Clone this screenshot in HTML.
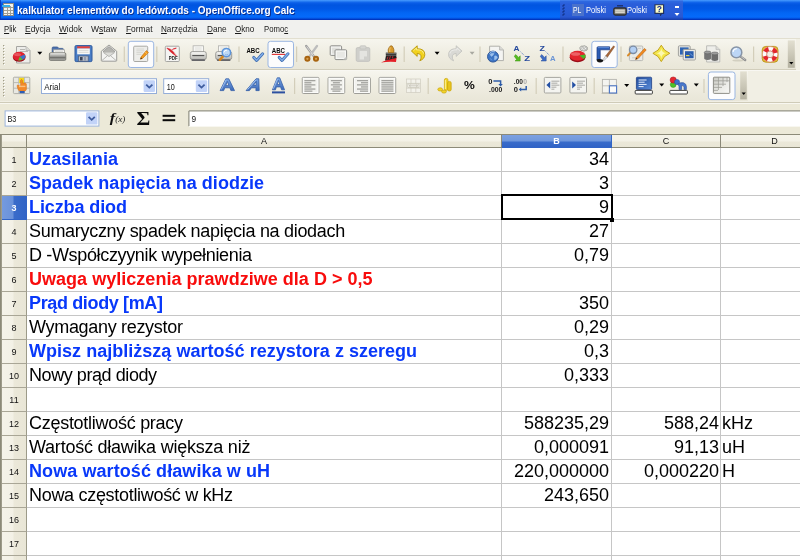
<!DOCTYPE html>
<html lang="pl">
<head>
<meta charset="utf-8">
<title>kalkulator elementów do ledówt.ods - OpenOffice.org Calc</title>
<style>
html,body{margin:0;padding:0;}
body{width:800px;height:560px;overflow:hidden;background:#ECE9D8;position:relative;font-family:"Liberation Sans","DejaVu Sans",sans-serif;}
#app{position:absolute;left:0;top:0;width:800px;height:560px;overflow:hidden;background:#ECE9D8;}
#app{will-change:transform;}
#app div,#app span,#app svg,#app i,#app b{position:absolute;box-sizing:border-box;display:block;}
#app u{text-decoration:underline;}
/* title bar */
#title{left:0;top:0;width:800px;height:20px;background:linear-gradient(to bottom,#4A9CFF 0px,#2A80F4 1.2px,#0A5EE8 2.8px,#0055E0 5px,#0058E6 9px,#0366F4 13px,#056AFA 17px,#0458E6 18.2px,#0038C4 19.2px,#0030B8 20px);}
#title .txt{text-shadow:1px 1px 0 #0A2A8A;}
#lang{left:560px;top:0;width:123px;height:20px;background:linear-gradient(to bottom,#4C86EE 0,#2E68E0 1.5px,#2A5EDA 4px,#295CD8 12px,#2858D2 17px,#1E48BC 18.6px,#18389E 20px);}
/* menu */
#menu{left:0;top:20px;width:800px;height:18px;background:#F1F1EE;}
/* toolbars */
#tb1{left:0;top:38px;width:800px;height:32px;background:#F1EFE4;border-top:1px solid #E2DFD0;}
#tb1:after{content:"";position:absolute;left:0;top:0;width:796px;height:30px;background:linear-gradient(to bottom,#F6F5EE 0,#EFEDE1 50%,#E9E6D8 100%);border-bottom:1px solid #D2CEBC;}
#tb2{left:0;top:70px;width:800px;height:34px;background:#F1EFE4;border-top:1px solid #F8F7F2;border-bottom:1px solid #F8F7F0;}
#tb2:after{content:"";position:absolute;left:0;top:0;width:748px;height:30px;background:linear-gradient(to bottom,#F6F5EE 0,#EFEDE1 50%,#E9E6D8 100%);}
#tb2:before{content:"";position:absolute;left:0;top:31px;width:800px;height:1px;background:#CFCBB8;}
#fbar{left:0;top:104px;width:800px;height:31px;background:#ECE9D8;border-bottom:1px solid #8C8A78;}
/* grid */
#grid{left:0;top:135px;width:800px;height:425px;background:#fff;}
#grid .hl{left:27px;width:773px;height:1px;background:#C6C6C6;}
#grid .vl{top:13px;width:1px;height:413px;background:#C6C6C6;}
#grid .rh{left:2px;width:25px;height:24px;background:linear-gradient(to right,#F5F3E9 0,#F3F1E6 11px,#EBE8D9 12px,#E9E6D6 100%);border-bottom:1px solid #A9A696;border-right:1px solid #9C9A88;font-size:9px;color:#111;text-align:center;line-height:25px;}
#grid #rh3{background:linear-gradient(to right,#749ADE 0,#6A92DA 11px,#3A6CCA 12px,#3164C6 100%);border-color:#3164C6;color:#fff;font-weight:bold;}
#grid #edge{left:0;top:0;width:2px;height:425px;background:linear-gradient(to right,#8C8A78 0,#8C8A78 1.3px,#C9C6B6 2px);}
#grid .ch{top:0;height:13px;background:linear-gradient(to bottom,#F5F3E9 0,#F3F1E6 6px,#EBE8D9 7px,#E9E6D6 100%);border-bottom:1px solid #8C8A78;border-right:1px solid #8A8878;font-size:9px;color:#111;text-align:center;line-height:13px;}
#grid #chB{background:linear-gradient(to bottom,#7CA0E0 0,#7098DC 6px,#3A6CCA 7px,#3164C6 100%);border-color:#3164C6;color:#fff;font-weight:bold;}
#grid .c{height:24px;line-height:24px;margin-top:-1px;font-size:18px;white-space:nowrap;color:#000;}
#grid .a{left:29px;}
#grid .bl{color:#0838FA;font-weight:bold;}
#grid .rd{color:#F80C0C;font-weight:bold;}
#grid .r{text-align:right;}
</style>
</head>
<body>
<div id="app">
<div id="title"><div style="left:0;top:0;width:1px;height:20px;background:#0A34B4;opacity:.8"></div>
<svg style="left:2px;top:2px" width="13" height="15" viewBox="0 0 13 15">
<rect x="1.5" y="1.5" width="10" height="12" fill="#F4F4F0" stroke="#8A8A86" stroke-width="1"/>
<path d="M2 5.5H11M2 8.5H11M2 11.5H11M5.5 4V13M8.5 4V13" stroke="#A09E96" stroke-width="1" fill="none"/>
<rect x="0" y="3" width="8" height="2" fill="#38B0E8"/>
</svg>
<span class="txt" style="left:17.0px;top:3.1px;height:15px;line-height:15px;font-size:11px;color:#fff;white-space:nowrap;font-weight:bold;transform:scaleX(0.910);transform-origin:0 0;">kalkulator elementów do ledówt.ods - OpenOffice.org Calc</span>
<div id="lang">
<svg style="left:2px;top:4px" width="4" height="13" viewBox="0 0 4 13"><path d="M2.5 0.5l-2 2M2.5 3.5l-2 2M2.5 6.5l-2 2M2.5 9.5l-2 2" stroke="#14358E" stroke-width="1.5" fill="none"/></svg>
<div style="left:12px;top:4px;width:12px;height:12px;background:#4A72CC"></div>
<span style="left:13.0px;top:3.6px;height:13px;line-height:13px;font-size:9px;color:#fff;white-space:nowrap;transform:scaleX(0.754);transform-origin:0 0;">PL</span>
<span style="left:25.5px;top:3.6px;height:13px;line-height:13px;font-size:9px;color:#fff;white-space:nowrap;transform:scaleX(0.833);transform-origin:0 0;">Polski</span>
<svg style="left:53px;top:5px" width="14" height="11" viewBox="0 0 14 11">
<path d="M4 0.8H10" stroke="#1A2A5A" stroke-width="1.2"/>
<rect x="0.8" y="3" width="12.4" height="7" rx="1.5" fill="#8A8880" stroke="#2E2E2E" stroke-width="1.3"/>
<rect x="2.2" y="4.6" width="9.6" height="3.4" fill="#D8D6CC"/><path d="M2.2 6.3h9.6" stroke="#A8A69C" stroke-width="0.6"/>
</svg>
<span style="left:67.0px;top:3.6px;height:13px;line-height:13px;font-size:9px;color:#fff;white-space:nowrap;transform:scaleX(0.833);transform-origin:0 0;">Polski</span>
<svg style="left:94px;top:4px" width="11" height="12" viewBox="0 0 11 12">
<path d="M1 0.8H9.6V9.4H7.5L6.6 11.2L6.2 9.4H1Z" fill="#FFFFC6" stroke="#22305A" stroke-width="1.1"/>
<text x="5.3" y="8.2" font-family="Liberation Sans,sans-serif" font-size="8.5" font-weight="bold" fill="#1A2A8A" text-anchor="middle">?</text>
</svg>
<div style="left:115px;top:6px;width:4px;height:2px;background:#fff"></div>
<svg style="left:114px;top:13px" width="6" height="3" viewBox="0 0 6 3"><path d="M0.5 0H5.5L3 3Z" fill="#fff"/></svg>
</div>
</div>
<div id="menu">
<span style="left:4.1px;top:2.7px;height:13px;line-height:13px;font-size:9.2px;color:#1a1a1a;white-space:nowrap;transform:scaleX(0.837);transform-origin:0 0;"><u>P</u>lik</span>
<span style="left:24.7px;top:2.7px;height:13px;line-height:13px;font-size:9.2px;color:#1a1a1a;white-space:nowrap;transform:scaleX(0.918);transform-origin:0 0;"><u>E</u>dycja</span>
<span style="left:59.1px;top:2.7px;height:13px;line-height:13px;font-size:9.2px;color:#1a1a1a;white-space:nowrap;transform:scaleX(0.904);transform-origin:0 0;"><u>W</u>idok</span>
<span style="left:91.0px;top:2.7px;height:13px;line-height:13px;font-size:9.2px;color:#1a1a1a;white-space:nowrap;transform:scaleX(0.928);transform-origin:0 0;">W<u>s</u>taw</span>
<span style="left:125.7px;top:2.7px;height:13px;line-height:13px;font-size:9.2px;color:#1a1a1a;white-space:nowrap;transform:scaleX(0.909);transform-origin:0 0;"><u>F</u>ormat</span>
<span style="left:160.9px;top:2.7px;height:13px;line-height:13px;font-size:9.2px;color:#1a1a1a;white-space:nowrap;transform:scaleX(0.884);transform-origin:0 0;"><u>N</u>arzędzia</span>
<span style="left:206.6px;top:2.7px;height:13px;line-height:13px;font-size:9.2px;color:#1a1a1a;white-space:nowrap;transform:scaleX(0.896);transform-origin:0 0;"><u>D</u>ane</span>
<span style="left:235.3px;top:2.7px;height:13px;line-height:13px;font-size:9.2px;color:#1a1a1a;white-space:nowrap;transform:scaleX(0.882);transform-origin:0 0;"><u>O</u>kno</span>
<span style="left:263.7px;top:2.7px;height:13px;line-height:13px;font-size:9.2px;color:#1a1a1a;white-space:nowrap;transform:scaleX(0.842);transform-origin:0 0;">Pomo<u>c</u></span>
</div>
<div id="tb1"></div>
<svg id="tb1i" style="left:0;top:38px" width="800" height="33" viewBox="0 38 800 33">
<rect x="3" y="45" width="1.3" height="1.3" fill="#A29E88"/><rect x="4" y="46" width="1" height="1" fill="#FFFFFF"/><rect x="3" y="48" width="1.3" height="1.3" fill="#A29E88"/><rect x="4" y="49" width="1" height="1" fill="#FFFFFF"/><rect x="3" y="51" width="1.3" height="1.3" fill="#A29E88"/><rect x="4" y="52" width="1" height="1" fill="#FFFFFF"/><rect x="3" y="54" width="1.3" height="1.3" fill="#A29E88"/><rect x="4" y="55" width="1" height="1" fill="#FFFFFF"/><rect x="3" y="57" width="1.3" height="1.3" fill="#A29E88"/><rect x="4" y="58" width="1" height="1" fill="#FFFFFF"/><rect x="3" y="60" width="1.3" height="1.3" fill="#A29E88"/><rect x="4" y="61" width="1" height="1" fill="#FFFFFF"/><rect x="3" y="63" width="1.3" height="1.3" fill="#A29E88"/><rect x="4" y="64" width="1" height="1" fill="#FFFFFF"/>
<g>
<path d="M16.5 46.5H26L30 50.5V63H16.5Z" fill="#EDEDEA" stroke="#A6A6A2" stroke-width="1"/>
<path d="M26 46.5V50.5H30" fill="#DADAD6" stroke="#B4B4B0" stroke-width="0.8"/>
<path d="M20 49.5h5M20 51.5h8" stroke="#B8B8B4" stroke-width="1"/>
<ellipse cx="19.2" cy="57.4" rx="6.3" ry="4.4" fill="#96101A"/>
<ellipse cx="19.2" cy="56.2" rx="6.3" ry="4.4" fill="#DE2430"/>
<ellipse cx="17.5" cy="54.6" rx="3.5" ry="1.6" fill="#F06A70" opacity="0.7"/>
<path d="M19.8 56.4L24.9 54.6A6.3 4.4 0 0 1 22.5 59.8Z" fill="#3A74C8"/>
<path d="M19.8 56.4L22.5 59.8A6.3 4.4 0 0 1 18.2 60.4Z" fill="#58C030"/>
</g>
<path d="M37.3 51.8h5l-2.5 3z" fill="#000"/>
<g>
<defs><linearGradient id="opn" x1="0" y1="0" x2="0" y2="1"><stop offset="0" stop-color="#D6D6D2"/><stop offset="0.45" stop-color="#A6A6A2"/><stop offset="0.6" stop-color="#6E6E6A"/><stop offset="0.75" stop-color="#8E8E8A"/><stop offset="1" stop-color="#B0B0AC"/></linearGradient></defs>
<path d="M52.2 52V48Q52.2 47 53.2 47H57.6L58.8 48.4H62.4Q63.4 48.4 63.4 49.4V52Z" fill="#4E72AE" stroke="#3A5A90" stroke-width="0.8"/>
<rect x="53.6" y="49.8" width="10.8" height="4.6" fill="#FAFAF8" stroke="#A2A29E" stroke-width="0.8"/>
<path d="M55 51.4h8" stroke="#D4D4D0" stroke-width="0.8"/>
<rect x="49.4" y="52.8" width="16.4" height="7.6" rx="1.2" fill="url(#opn)" stroke="#76766F" stroke-width="0.9"/>
<path d="M50.6 53.8H64.6" stroke="#ECECE8" stroke-width="0.9"/>
</g>
<g>
<path d="M76.2 45.6H90.8Q92 45.6 92 46.8V60.4Q92 61.6 90.8 61.6H76.2Q75 61.6 75 60.4V46.8Q75 45.6 76.2 45.6Z" fill="#4A7EC6" stroke="#2F5A9E" stroke-width="1"/>
<rect x="77.2" y="46.3" width="12.6" height="2.2" fill="#E2403C"/>
<rect x="77.2" y="48.5" width="12.6" height="5.8" fill="#F8F8F6"/>
<path d="M78.5 50.4h10M78.5 52.3h10" stroke="#D0D0CC" stroke-width="0.8"/>
<rect x="78.6" y="56" width="9.6" height="5.2" fill="#B8BEC8" stroke="#50607A" stroke-width="0.7"/>
<rect x="80" y="57" width="2.6" height="3.4" fill="#3A4458"/>
<rect x="84.4" y="57" width="1.2" height="3.4" fill="#7A8498"/>
</g>
<g>
<path d="M101.3 51.2L109 45L116.7 51.2V60.4Q116.7 61.2 115.9 61.2H102.1Q101.3 61.2 101.3 60.4Z" fill="#F4F4F2" stroke="#9C9C98" stroke-width="1"/>
<path d="M103 51.4L109 46.6L115 51.4L109 55.6Z" fill="#B4B4B0" stroke="#8E8E8A" stroke-width="0.7"/>
<path d="M103.4 52.6L109 56.6L114.6 52.6" fill="#DCDCD8" stroke="#A4A4A0" stroke-width="0.7"/>
<path d="M101.6 60.8L107.4 55.8M116.4 60.8L110.6 55.8" stroke="#A8A8A4" stroke-width="0.8" fill="none"/>
</g>
<path d="M124.3 46.5V62" stroke="#D3CEBA" stroke-width="1.2"/>
<rect x="128.3" y="41.3" width="25.399999999999977" height="26.200000000000003" rx="2.5" fill="#FCFCFD" stroke="#9AB6E2" stroke-width="1"/>
<g>
<rect x="133.7" y="46.2" width="14" height="15.3" rx="1" fill="#EDEDEA" stroke="#A8A8A4" stroke-width="1"/>
<path d="M136.4 49h7.6M136.4 50.8h8M136.4 52.6h6.4M136.4 54.4h5" stroke="#D0D0CC" stroke-width="0.8"/>
<path d="M146.4 50.6L148.4 52.4L142.6 58.4L140.4 59.2L141 57Z" fill="#F29A1C" stroke="#C06A0C" stroke-width="0.6"/>
<path d="M145 52L147 53.8" stroke="#FAD070" stroke-width="0.7"/>
<path d="M140.4 59.2L141 57.4L142.2 58.6Z" fill="#2A2A2A"/>
</g>
<path d="M156.8 46.5V62" stroke="#D3CEBA" stroke-width="1.2"/>
<g>
<rect x="165.3" y="46.2" width="14" height="15.3" rx="1" fill="#F4F4F2" stroke="#A6A6A2" stroke-width="1"/>
<path d="M166.8 48Q170.6 48.6 173 51.4Q175 53.8 176.4 56Q173.4 54.4 170.8 52Q168.6 50 166.8 48Z" fill="#D8202A" stroke="#D8202A" stroke-width="0.6"/>
<path d="M176.4 47.6Q173.4 48 171 50.2Q173.4 49.8 176.4 48.8Z" fill="#DC3A42"/>
<path d="M174.6 53.4L177.4 56.2" stroke="#EFA8AC" stroke-width="0.9"/>
</g>
<text x="168.8" y="60.4" font-family="Liberation Sans,sans-serif" font-size="4.6" fill="#1E1E1E" textLength="8.8" lengthAdjust="spacingAndGlyphs" font-weight="bold">PDF</text>
<defs><linearGradient id="prb" x1="0" y1="0" x2="0" y2="1"><stop offset="0" stop-color="#F0F0EE"/><stop offset="0.5" stop-color="#D6D6D2"/><stop offset="1" stop-color="#B4B4B0"/></linearGradient></defs>
<g transform="translate(190.1,0)">
<rect x="3" y="45.8" width="10.4" height="7" fill="#F8F8F6" stroke="#B0B0AC" stroke-width="0.8"/>
<path d="M4.8 48h6.8M4.8 50h6.8" stroke="#D6D6D2" stroke-width="0.8"/>
<rect x="0.2" y="51.6" width="16" height="8" rx="2" fill="url(#prb)" stroke="#8A8A86" stroke-width="0.8"/>
<path d="M2.2 55.6H14.2" stroke="#4E4E4E" stroke-width="1.1"/>
<path d="M2 53h12.4" stroke="#FAFAF8" stroke-width="0.9"/>
<rect x="1.4" y="59.2" width="13.6" height="1.9" rx="0.8" fill="#66666A"/>
</g>
<g transform="translate(215.5,0)">
<rect x="3" y="45.8" width="10.4" height="7" fill="#F8F8F6" stroke="#B0B0AC" stroke-width="0.8"/>
<path d="M4.8 48h6.8M4.8 50h6.8" stroke="#D6D6D2" stroke-width="0.8"/>
<rect x="0.2" y="51.6" width="16" height="8" rx="2" fill="url(#prb)" stroke="#8A8A86" stroke-width="0.8"/>
<path d="M2.2 55.6H14.2" stroke="#4E4E4E" stroke-width="1.1"/>
<path d="M2 53h12.4" stroke="#FAFAF8" stroke-width="0.9"/>
<rect x="1.4" y="59.2" width="13.6" height="1.9" rx="0.8" fill="#66666A"/>
</g>
<g>
<path d="M223.4 56L219.8 59.8" stroke="#D8861C" stroke-width="2.4" stroke-linecap="round"/>
<circle cx="226.4" cy="52.6" r="4.2" fill="#C0DAF6" stroke="#5C94DA" stroke-width="1.5"/>
<path d="M224 52.4A2.6 2.6 0 0 1 227 50.2" stroke="#FFFFFF" stroke-width="1" fill="none"/>
<path d="M225 54.6q1.6 0.8 3.2-0.4" stroke="#7AA8E0" stroke-width="0.7" fill="none"/>
</g>
<path d="M239 46.5V62" stroke="#D3CEBA" stroke-width="1.2"/>
<g><text x="246.4" y="52.8" font-family="Liberation Sans,sans-serif" font-size="7" fill="#0A0A0A" textLength="13.2" lengthAdjust="spacingAndGlyphs" font-weight="bold">ABC</text><path d="M253.8 57.4L256.6 60.4L262.6 53.8" fill="none" stroke="#4270B4" stroke-width="3" stroke-linecap="round" stroke-linejoin="round"/><path d="M253.8 57.4L256.6 60.4L262.6 53.8" fill="none" stroke="#86B2EA" stroke-width="1.3" stroke-linecap="round" stroke-linejoin="round"/></g>
<rect x="268" y="41.3" width="25.5" height="26.200000000000003" rx="2.5" fill="#FCFCFD" stroke="#9AB6E2" stroke-width="1"/>
<g><text x="271.8" y="52.8" font-family="Liberation Sans,sans-serif" font-size="7" fill="#0A0A0A" textLength="13.2" lengthAdjust="spacingAndGlyphs" font-weight="bold">ABC</text><path d="M271.8 54.4h13.4" stroke="#E03A3A" stroke-width="1.2"/><path d="M279.2 57.4L282.0 60.4L288.0 53.8" fill="none" stroke="#4270B4" stroke-width="3" stroke-linecap="round" stroke-linejoin="round"/><path d="M279.2 57.4L282.0 60.4L288.0 53.8" fill="none" stroke="#86B2EA" stroke-width="1.3" stroke-linecap="round" stroke-linejoin="round"/></g>
<path d="M296.6 46.5V62" stroke="#D3CEBA" stroke-width="1.2"/>
<g>
<path d="M306.2 46L314.6 57.4" stroke="#9E9E9E" stroke-width="2.3" stroke-linecap="round"/>
<path d="M317 46L308.6 57.4" stroke="#BDBDBD" stroke-width="2.3" stroke-linecap="round"/>
<path d="M306.6 46.4L313.6 56" stroke="#E4E4E4" stroke-width="0.8"/>
<circle cx="307.4" cy="58.8" r="2.1" fill="#D8A050" stroke="#A86410" stroke-width="1.9"/>
<circle cx="316" cy="58.8" r="2.1" fill="#D8A050" stroke="#A86410" stroke-width="1.9"/>
</g>
<g>
<rect x="330.2" y="45.8" width="11.4" height="9.6" rx="1" fill="#F4F4F2" stroke="#8E8E8A" stroke-width="1"/>
<rect x="332" y="47.6" width="7.8" height="6" fill="#E0E0DC"/>
<rect x="335" y="49.8" width="11.6" height="9.8" rx="1" fill="#F8F8F6" stroke="#8E8E8A" stroke-width="1"/>
<rect x="336.8" y="51.6" width="8" height="6.2" fill="#E8E8E4"/>
<path d="M343 59.6L346.6 56.4V59.6Z" fill="#C4C4C0"/>
</g>
<g>
<rect x="356.2" y="47.6" width="13.6" height="13.8" rx="1.4" fill="#CFCFCB" stroke="#C0C0BC" stroke-width="0.8"/>
<rect x="360" y="45.8" width="6" height="3.2" rx="1" fill="#D6D6D2" stroke="#C0C0BC" stroke-width="0.7"/>
<path d="M359.6 51H367V56.6H364V59.4H359.6Z" fill="#E4E4E0"/>
</g>
<g>
<path d="M381 62.4Q388 58.6 396.6 57.4L396 62Q388 61.6 381 62.4Z" fill="#E42028"/>
<path d="M386 55.4H396.2L396.6 58L385 60.6Z" fill="#1E1E1E"/>
<path d="M387 59.6l1-3M389.6 59l0.8-3M392.4 58.4l0.6-2.6" stroke="#D83038" stroke-width="0.8"/>
<rect x="385.8" y="52.6" width="10.6" height="3" fill="#3A3A3A"/>
<path d="M386 53.4h10.4" stroke="#8A8A8A" stroke-width="0.7"/>
<path d="M388.4 52.6Q387.6 49.6 389.2 47.4Q390 45.8 391.2 45.8Q392.4 45.8 393 47.4Q394.4 49.6 393.8 52.6Z" fill="#D89A2C" stroke="#9A6410" stroke-width="0.8"/>
<path d="M390.2 47.4Q389.4 49.6 389.8 52" stroke="#F2CC7A" stroke-width="0.9" fill="none"/>
</g>
<path d="M404.2 46.5V62" stroke="#D3CEBA" stroke-width="1.2"/>
<g><path d="M411.4 51L417.2 45.8V48.8Q424.8 48.6 424.8 54.6Q424.8 58.8 419.8 60.8Q421.6 58.2 421 55.8Q420.4 53.4 417.2 53.4V56.4Z" fill="#F2D21E" stroke="#B8960A" stroke-width="0.9" stroke-linejoin="round"/>
<path d="M413.4 50.8L416.4 48V49.8Q423 49.6 423.6 53.6" stroke="#FBF09A" stroke-width="0.9" fill="none"/></g>
<path d="M434.6 51.8h5l-2.5 3z" fill="#000"/>
<g transform="translate(873.4,0) scale(-1,1)"><path d="M411.4 51L417.2 45.8V48.8Q424.8 48.6 424.8 54.6Q424.8 58.8 419.8 60.8Q421.6 58.2 421 55.8Q420.4 53.4 417.2 53.4V56.4Z" fill="#D9D9D5" stroke="#C4C4C0" stroke-width="0.9" stroke-linejoin="round"/>
<path d="M413.4 50.8L416.4 48V49.8Q423 49.6 423.6 53.6" stroke="#ECECEA" stroke-width="0.9" fill="none"/></g>
<path d="M469.6 51.8h5l-2.5 3z" fill="#A8A8A0"/>
<path d="M480 46.5V62" stroke="#D3CEBA" stroke-width="1.2"/>
<g>
<path d="M489.6 46.2H499.6L503.4 50V60.6H489.6Z" fill="#F4F4F2" stroke="#B0B0AC" stroke-width="1"/>
<path d="M499.6 46.2V50H503.4" fill="#DCDCD8" stroke="#B0B0AC" stroke-width="0.8"/>
<circle cx="493" cy="56.6" r="5.5" fill="#3C74C4" stroke="#2A5294" stroke-width="0.9"/>
<path d="M490 54.4Q492 52.6 494 53.4Q493.4 55.4 491.4 56.4ZM494.6 56Q497 55.4 497.4 57.6Q496.4 60 494.4 59.6ZM490.2 58.4l1.6 1.8" fill="#9CC0EC" stroke="#9CC0EC" stroke-width="0.5"/>
<path d="M489.4 53.6A4.6 4.6 0 0 1 495 51.8" stroke="#A8C8F0" stroke-width="0.9" fill="none"/>
</g>
<text x="513.6" y="51.2" font-family="Liberation Sans,sans-serif" font-size="7.6" fill="#24489C" textLength="6.0" lengthAdjust="spacingAndGlyphs" font-weight="bold">A</text>
<text x="524.2" y="61" font-family="Liberation Sans,sans-serif" font-size="7.6" fill="#24489C" textLength="5.8" lengthAdjust="spacingAndGlyphs" font-weight="bold">Z</text>
<path d="M520.4 51.6L524.2 55.4" stroke="#5A7CC0" stroke-width="1" stroke-dasharray="1 1"/>
<path d="M514.2 56.2L515.8 54.6L518.6 57.4L520.2 55.8V61H515L516.6 59.4Z" fill="#56BC22" stroke="#3A8E12" stroke-width="0.5"/>
<text x="539.4" y="51.2" font-family="Liberation Sans,sans-serif" font-size="7.6" fill="#24489C" textLength="5.4" lengthAdjust="spacingAndGlyphs" font-weight="bold">Z</text>
<text x="550" y="61" font-family="Liberation Sans,sans-serif" font-size="7.6" fill="#6A94D4" textLength="5.6" lengthAdjust="spacingAndGlyphs" font-weight="bold">A</text>
<path d="M545.6 51.6L549.6 55.4" stroke="#5A7CC0" stroke-width="1" stroke-dasharray="1 1"/>
<path d="M540.2 56.2L541.8 54.6L544.6 57.4L546.2 55.8V61H541L542.6 59.4Z" fill="#3E6CC4" stroke="#2A4E98" stroke-width="0.5"/>
<path d="M563 46.5V62" stroke="#D3CEBA" stroke-width="1.2"/>
<g>
<path d="M580 47.4Q581 45.4 583 46.2Q584.4 45.2 585.8 46.4Q587.6 46.6 587.4 48.6Q587.6 50.6 585.4 50.6Q584 51.6 582.6 50.6Q580.4 50.8 580 49Z" fill="#E6E6E2" stroke="#8E8E8A" stroke-width="0.8"/>
<circle cx="582.6" cy="48.2" r="1" fill="#FAFAF8" stroke="#8E8E8A" stroke-width="0.5"/><circle cx="585.4" cy="48.6" r="1" fill="#FAFAF8" stroke="#8E8E8A" stroke-width="0.5"/>
<ellipse cx="577.6" cy="57.2" rx="7.9" ry="5" fill="#9A0E18"/>
<ellipse cx="577.6" cy="55.8" rx="7.9" ry="5" fill="#E2262E"/>
<ellipse cx="575.6" cy="54" rx="4.6" ry="1.8" fill="#F27A7E" opacity="0.7"/>
<path d="M579.4 55.6L585.4 54.4A7.9 5 0 0 1 583.6 59Z" fill="#48B828"/>
</g>
<rect x="591.8" y="41.3" width="25.40000000000009" height="26.200000000000003" rx="2.5" fill="#FCFCFD" stroke="#9AB6E2" stroke-width="1"/>
<g>
<path d="M597 47.8Q597 46.8 598 46.8H609.6V49.8H600.2V60H597Z" fill="#2C5CB4" stroke="#1A3A84" stroke-width="0.7"/>
<path d="M597.8 47.6H609" stroke="#6A98E0" stroke-width="0.8"/>
<path d="M596.6 59.4Q599.6 58.2 603.4 60Q603.4 62.4 600 62.4Q596.6 62.4 596.6 59.4Z" fill="#161616"/>
<path d="M613.6 45.8L614.6 46.8L607.4 57.2L605.6 56Z" fill="#A8683A" stroke="#7A4420" stroke-width="0.5"/>
<path d="M607.4 57.2L605.6 56L603.2 59.4L604.2 60.4Z" fill="#E8E8E8" stroke="#8A8A8A" stroke-width="0.5"/>
</g>
<path d="M621 46.5V62" stroke="#D3CEBA" stroke-width="1.2"/>
<g>
<rect x="629.4" y="46" width="13.4" height="14.6" rx="1" fill="#EAEAE6" stroke="#B4B4B0" stroke-width="0.9"/>
<path d="M632 57.8h8M638 48.4h3" stroke="#CACAC6" stroke-width="0.9"/>
<path d="M630.6 52.6L628 55.4" stroke="#D88A28" stroke-width="2" stroke-linecap="round"/>
<circle cx="633.2" cy="49.8" r="3.7" fill="#B4D0F4" stroke="#7C8CA4" stroke-width="1.3"/>
<path d="M644.6 48.4L646.2 50L638 58.6L635.6 59.6L636.4 57.2Z" fill="#F28A1C" stroke="#B85E0C" stroke-width="0.6"/>
<path d="M635.6 59.6L636.2 57.8L637.4 58.8Z" fill="#2A2A2A"/>
</g>
<g>
<path d="M661.3 45.2Q663.6 51 669.8 53.3Q663.6 55.6 661.3 61.6Q659 55.6 652.9 53.3Q659 51 661.3 45.2Z" fill="#F4E648" stroke="#C4A416" stroke-width="1" stroke-linejoin="round"/>
<path d="M661.3 48.4Q661.9 52.6 666 53.3Q661.9 54 661.3 58.2Q660.7 54 656.6 53.3Q660.7 52.6 661.3 48.4Z" fill="#FCF8B0"/>
</g>
<g>
<rect x="678.4" y="45.8" width="11.8" height="10.4" rx="1" fill="#E6E6E2" stroke="#9A9A96" stroke-width="0.9"/>
<rect x="680" y="47.4" width="8.6" height="7.2" fill="#2E64B4"/>
<rect x="683.2" y="49.4" width="12.2" height="10.6" rx="1" fill="#ECECE8" stroke="#9A9A96" stroke-width="0.9"/>
<rect x="685" y="51.2" width="8.6" height="7" fill="#2A5CAC"/>
<path d="M686 55.6h3.4" stroke="#E8D040" stroke-width="1.2"/><path d="M690 53.4l2.4 2.4" stroke="#8AB4E8" stroke-width="0.8"/>
</g>
<g>
<path d="M706.6 45.8H716L719.8 49.6V62H706.6Z" fill="#EEEEEA" stroke="#B8B8B4" stroke-width="0.9"/>
<path d="M716 45.8V49.6H719.8" fill="#DADAD6" stroke="#B8B8B4" stroke-width="0.7"/>
<path d="M704.2 52.4V58.6Q704.2 60 707.6 60Q711 60 711 58.6V52.4Z" fill="#747474"/>
<ellipse cx="707.6" cy="52.4" rx="3.4" ry="1.4" fill="#9C9C9C" stroke="#5C5C5C" stroke-width="0.5"/>
<path d="M711.4 53.4V59.6Q711.4 61 714.8 61Q718.2 61 718.2 59.6V53.4Z" fill="#6C6C6C"/>
<ellipse cx="714.8" cy="53.4" rx="3.4" ry="1.4" fill="#9C9C9C" stroke="#5C5C5C" stroke-width="0.5"/>
</g>
<g>
<ellipse cx="738" cy="60.6" rx="5.6" ry="1" fill="#D2CFC0"/>
<path d="M740.6 56.6L745.2 60" stroke="#8C8C8C" stroke-width="2.4" stroke-linecap="round"/>
<path d="M740.8 56.4L745 59.6" stroke="#D2D2D2" stroke-width="0.8" stroke-linecap="round"/>
<circle cx="736.4" cy="52.4" r="5.4" fill="#BCD6F6" stroke="#8794A6" stroke-width="1.5"/>
<path d="M733 51.8A3.6 3.6 0 0 1 737 48.8" stroke="#FFFFFF" stroke-width="1.1" fill="none"/>
</g>
<path d="M753.6 46.5V62" stroke="#D3CEBA" stroke-width="1.2"/>
<g>
<rect x="762.2" y="46.4" width="15.8" height="15.8" rx="3.6" fill="#E4BC3C" stroke="#B88A10" stroke-width="0.8"/>
<circle cx="770.1" cy="54.3" r="5.6" fill="none" stroke="#FDFDFD" stroke-width="4.2"/>
<circle cx="770.1" cy="54.3" r="5.6" fill="none" stroke="#E3262C" stroke-width="4.2" stroke-dasharray="4.4 4.4" transform="rotate(22.5 770.1 54.3)"/>
<circle cx="770.1" cy="54.3" r="7.7" fill="none" stroke="#C23038" stroke-width="0.5" opacity="0.6"/>
<circle cx="770.1" cy="54.3" r="3.4" fill="#F2F0E6" stroke="#C84850" stroke-width="0.6"/>
</g>
<defs><linearGradient id="ovf" x1="0" y1="0" x2="0" y2="1"><stop offset="0" stop-color="#E2DFD0"/><stop offset="1" stop-color="#B4B1A0"/></linearGradient></defs>
<rect x="787.8" y="40.4" width="7" height="27.4" fill="url(#ovf)"/>
<path d="M789.2 62h4.2l-2.1 2.4z" fill="#000"/>
</svg>
<div id="tb2"></div>
<svg id="tb2i" style="left:0;top:70px" width="800" height="34" viewBox="0 70 800 34">
<rect x="3" y="77" width="1.3" height="1.3" fill="#A29E88"/><rect x="4" y="78" width="1" height="1" fill="#FFFFFF"/><rect x="3" y="80" width="1.3" height="1.3" fill="#A29E88"/><rect x="4" y="81" width="1" height="1" fill="#FFFFFF"/><rect x="3" y="83" width="1.3" height="1.3" fill="#A29E88"/><rect x="4" y="84" width="1" height="1" fill="#FFFFFF"/><rect x="3" y="86" width="1.3" height="1.3" fill="#A29E88"/><rect x="4" y="87" width="1" height="1" fill="#FFFFFF"/><rect x="3" y="89" width="1.3" height="1.3" fill="#A29E88"/><rect x="4" y="90" width="1" height="1" fill="#FFFFFF"/><rect x="3" y="92" width="1.3" height="1.3" fill="#A29E88"/><rect x="4" y="93" width="1" height="1" fill="#FFFFFF"/><rect x="3" y="95" width="1.3" height="1.3" fill="#A29E88"/><rect x="4" y="96" width="1" height="1" fill="#FFFFFF"/>
<g>
<rect x="13.4" y="77.2" width="16.4" height="16.4" rx="1" fill="#E8E8E2" stroke="#A8A8A2" stroke-width="0.9"/>
<path d="M18.8 77.4V93.4M24.4 77.4V93.4M13.6 82.6H29.6M13.6 88.2H29.6" stroke="#B4B4AE" stroke-width="0.9"/>
<rect x="19.2" y="77.8" width="4.8" height="5.2" fill="#F4D81C"/>
<path d="M20.6 80.4Q21.6 78.4 22.6 80.4V83H25.4Q26.6 83.4 26.4 85.4V89.4Q26 91 24.4 91H19.6Q18.2 90.6 17.8 88.6L17 85.6Q17.6 84.4 18.8 85.6L20.6 86.6Z" fill="#F28A2C" stroke="#D06A10" stroke-width="0.5"/>
<rect x="19.6" y="91" width="5" height="2.2" fill="#2E5CB4"/>
<path d="M19 86.4h6.4" stroke="#FBC080" stroke-width="1.4"/>
</g>
<rect x="41.5" y="78.7" width="115" height="14.799999999999997" fill="#FFFFFF" stroke="#94ADD8" stroke-width="1"/><rect x="143.6" y="80.2" width="11.4" height="11.799999999999997" rx="1.2" fill="#C2D3F8"/><path d="M146.2 84.60000000000001l3.1 3l3.1 -3" fill="none" stroke="#3E5C9E" stroke-width="1.8"/>
<text x="44.2" y="89.6" font-family="Liberation Sans,sans-serif" font-size="9" fill="#111" textLength="16.0" lengthAdjust="spacingAndGlyphs">Arial</text>
<rect x="163.7" y="78.7" width="45.0" height="14.799999999999997" fill="#FFFFFF" stroke="#94ADD8" stroke-width="1"/><rect x="195.79999999999998" y="80.2" width="11.4" height="11.799999999999997" rx="1.2" fill="#C2D3F8"/><path d="M198.39999999999998 84.60000000000001l3.1 3l3.1 -3" fill="none" stroke="#3E5C9E" stroke-width="1.8"/>
<text x="166.8" y="89.6" font-family="Liberation Sans,sans-serif" font-size="9" fill="#111" textLength="8.0" lengthAdjust="spacingAndGlyphs">10</text>
<defs><linearGradient id="ab" x1="0" y1="0" x2="0" y2="1"><stop offset="0" stop-color="#7AA6E4"/><stop offset="1" stop-color="#3A68B8"/></linearGradient></defs>
<g transform="translate(219.8,78.8) skewX(0)">
<path d="M0.3 11.799999999999997L6.0 0H9.0L14.7 11.799999999999997H11.1L10.05 8.967999999999998H4.95L3.9000000000000004 11.799999999999997Z M6.0 6.607999999999999H9.0L7.5 2.595999999999999Z" fill="url(#ab)" stroke="#3660A8" stroke-width="0.8" fill-rule="evenodd" stroke-linejoin="round"/>
<path d="M6.3 1L1.5 10.799999999999997" stroke="#A8C8F4" stroke-width="0.8" fill="none"/></g>
<g transform="translate(250.6,78.8) skewX(-22)">
<path d="M0.272 11.799999999999997L5.44 0H8.16L13.328 11.799999999999997H10.064L9.112 8.967999999999998H4.488L3.536 11.799999999999997Z M5.44 6.607999999999999H8.16L6.8 2.595999999999999Z" fill="url(#ab)" stroke="#3660A8" stroke-width="0.8" fill-rule="evenodd" stroke-linejoin="round"/>
<path d="M5.712 1L1.36 10.799999999999997" stroke="#A8C8F4" stroke-width="0.8" fill="none"/></g>
<g transform="translate(272.2,77.8) skewX(0)">
<path d="M0.252 12.0L5.04 0H7.56L12.347999999999999 12.0H9.324L8.442 9.120000000000001H4.158L3.276 12.0Z M5.04 6.720000000000001H7.56L6.3 2.64Z" fill="url(#ab)" stroke="#3660A8" stroke-width="0.8" fill-rule="evenodd" stroke-linejoin="round"/>
<path d="M5.292 1L1.26 11.0" stroke="#A8C8F4" stroke-width="0.8" fill="none"/></g>
<rect x="272" y="91.4" width="13" height="2" fill="#2C50A0"/>
<path d="M294.6 78V94" stroke="#D3CEBA" stroke-width="1.2"/>
<g><rect x="302.3" y="77.4" width="16.6" height="16" rx="1" fill="#F2F2EE" stroke="#94948E" stroke-width="1"/><rect x="303.2" y="78.2" width="14.8" height="14.4" fill="none" stroke="#FFFFFF" stroke-width="0.8"/><rect x="304.4" y="80.0" width="11" height="1.3" fill="#A2A29E"/><rect x="304.4" y="82.1" width="7" height="1.3" fill="#A2A29E"/><rect x="304.4" y="84.2" width="11" height="1.3" fill="#A2A29E"/><rect x="304.4" y="86.3" width="7" height="1.3" fill="#A2A29E"/><rect x="304.4" y="88.4" width="11" height="1.3" fill="#A2A29E"/><rect x="304.4" y="90.5" width="8" height="1.3" fill="#A2A29E"/></g>
<g><rect x="328.1" y="77.4" width="16.6" height="16" rx="1" fill="#F2F2EE" stroke="#94948E" stroke-width="1"/><rect x="329.0" y="78.2" width="14.8" height="14.4" fill="none" stroke="#FFFFFF" stroke-width="0.8"/><rect x="330.9" y="80.0" width="11" height="1.3" fill="#A2A29E"/><rect x="332.9" y="82.1" width="7" height="1.3" fill="#A2A29E"/><rect x="330.9" y="84.2" width="11" height="1.3" fill="#A2A29E"/><rect x="332.9" y="86.3" width="7" height="1.3" fill="#A2A29E"/><rect x="330.9" y="88.4" width="11" height="1.3" fill="#A2A29E"/><rect x="332.4" y="90.5" width="8" height="1.3" fill="#A2A29E"/></g>
<g><rect x="353.7" y="77.4" width="16.6" height="16" rx="1" fill="#F2F2EE" stroke="#94948E" stroke-width="1"/><rect x="354.59999999999997" y="78.2" width="14.8" height="14.4" fill="none" stroke="#FFFFFF" stroke-width="0.8"/><rect x="357.0" y="80.0" width="11" height="1.3" fill="#A2A29E"/><rect x="361.0" y="82.1" width="7" height="1.3" fill="#A2A29E"/><rect x="357.0" y="84.2" width="11" height="1.3" fill="#A2A29E"/><rect x="361.0" y="86.3" width="7" height="1.3" fill="#A2A29E"/><rect x="357.0" y="88.4" width="11" height="1.3" fill="#A2A29E"/><rect x="360.0" y="90.5" width="8" height="1.3" fill="#A2A29E"/></g>
<g><rect x="379.1" y="77.4" width="16.6" height="16" rx="1" fill="#F2F2EE" stroke="#94948E" stroke-width="1"/><rect x="380.0" y="78.2" width="14.8" height="14.4" fill="none" stroke="#FFFFFF" stroke-width="0.8"/><rect x="381.4" y="80.0" width="12" height="1.3" fill="#A2A29E"/><rect x="381.4" y="82.1" width="12" height="1.3" fill="#A2A29E"/><rect x="381.4" y="84.2" width="12" height="1.3" fill="#A2A29E"/><rect x="381.4" y="86.3" width="12" height="1.3" fill="#A2A29E"/><rect x="381.4" y="88.4" width="12" height="1.3" fill="#A2A29E"/><rect x="381.4" y="90.5" width="12" height="1.3" fill="#A2A29E"/></g>
<g>
<rect x="406.4" y="79" width="14" height="13.6" fill="#F3F2EB" stroke="#CFCCBF" stroke-width="0.7"/>
<path d="M411 79V92.6M415.8 79V92.6M406.4 83.4H420.4M406.4 88.2H420.4" stroke="#CFCCBF" stroke-width="0.7"/>
<rect x="407.8" y="84" width="11.2" height="3.6" fill="#F3F2EB" stroke="#C6C3B6" stroke-width="0.7"/>
<path d="M409.2 85.8h8.4M410.6 84.8l-1.4 1l1.4 1M416.2 84.8l1.4 1l-1.4 1" stroke="#BDBAAE" stroke-width="0.7" fill="none"/>
</g>
<path d="M428.2 78V94" stroke="#D3CEBA" stroke-width="1.2"/>
<g>
<rect x="444.4" y="78.4" width="3.6" height="12" rx="1.6" fill="#F2D428" stroke="#C8A40C" stroke-width="0.7"/>
<rect x="447.6" y="81.4" width="3.6" height="9.6" rx="1.6" fill="#E8C41C" stroke="#C8A40C" stroke-width="0.7"/>
<ellipse cx="440.2" cy="89.4" rx="2.4" ry="1.6" fill="#F2D428" stroke="#C8A40C" stroke-width="0.7"/>
<ellipse cx="444" cy="91.6" rx="2.4" ry="1.5" fill="#F2D428" stroke="#C8A40C" stroke-width="0.7"/>
<path d="M445.4 80v9" stroke="#FBF0A0" stroke-width="0.9"/>
</g>
<text x="464" y="89.4" font-family="Liberation Sans,sans-serif" font-size="10.4" fill="#0A0A0A" textLength="10.8" lengthAdjust="spacingAndGlyphs" font-weight="bold">%</text>
<text x="488.2" y="83.8" font-family="Liberation Sans,sans-serif" font-size="6.6" fill="#1A1A1A" textLength="4.2" lengthAdjust="spacingAndGlyphs" font-weight="bold">0</text>
<path d="M493.4 81H500.6V84.4" fill="none" stroke="#2E5CA8" stroke-width="1.5"/><path d="M498.4 84h4.4l-2.2 2.4z" fill="#2E5CA8"/>
<text x="489" y="92" font-family="Liberation Sans,sans-serif" font-size="6.6" fill="#1A1A1A" textLength="13.4" lengthAdjust="spacingAndGlyphs" font-weight="bold">.000</text>
<text x="513.8" y="83.8" font-family="Liberation Sans,sans-serif" font-size="6.6" fill="#1A1A1A" textLength="9.2" lengthAdjust="spacingAndGlyphs" font-weight="bold">.00</text>
<text x="523.2" y="83.8" font-family="Liberation Sans,sans-serif" font-size="6.6" fill="#ACACAC" textLength="3.8" lengthAdjust="spacingAndGlyphs" font-weight="bold">0</text>
<text x="513.8" y="92" font-family="Liberation Sans,sans-serif" font-size="6.6" fill="#1A1A1A" textLength="4.2" lengthAdjust="spacingAndGlyphs" font-weight="bold">0</text>
<path d="M526.2 86V89.4H520.4" fill="none" stroke="#2E5CA8" stroke-width="1.5"/><path d="M521.2 87.2v4.4l-2.4 -2.2z" fill="#2E5CA8"/>
<path d="M536.2 78V94" stroke="#D3CEBA" stroke-width="1.2"/>
<g><rect x="544.3" y="77.4" width="16.6" height="15.6" rx="1" fill="#F4F4F0" stroke="#A6A6A0" stroke-width="1"/><rect x="551.4" y="80.6" width="8" height="1.2" fill="#B6B6B2"/><rect x="551.4" y="82.6" width="6" height="1.2" fill="#B6B6B2"/><rect x="551.4" y="84.6" width="8" height="1.2" fill="#B6B6B2"/><rect x="551.4" y="86.6" width="5" height="1.2" fill="#B6B6B2"/><rect x="551.4" y="88.6" width="3" height="1.2" fill="#B6B6B2"/><path d="M550.1999999999999 81.4V88.6L546.4 85Z" fill="#2450A4"/></g>
<g><rect x="569.9" y="77.4" width="16.6" height="15.6" rx="1" fill="#F4F4F0" stroke="#A6A6A0" stroke-width="1"/><rect x="577.0" y="80.6" width="8" height="1.2" fill="#B6B6B2"/><rect x="577.0" y="82.6" width="6" height="1.2" fill="#B6B6B2"/><rect x="577.0" y="84.6" width="8" height="1.2" fill="#B6B6B2"/><rect x="577.0" y="86.6" width="5" height="1.2" fill="#B6B6B2"/><rect x="577.0" y="88.6" width="3" height="1.2" fill="#B6B6B2"/><path d="M572.1999999999999 81.4V88.6L576.0 85Z" fill="#2450A4"/></g>
<path d="M594.2 78V94" stroke="#D3CEBA" stroke-width="1.2"/>
<g>
<path d="M601.6 93.4h15.8" stroke="#C6C3B4" stroke-width="1"/>
<rect x="602.4" y="79.4" width="14" height="13.4" fill="#F4F4F0" stroke="#B4B4AE" stroke-width="0.9"/>
<path d="M609.4 79.4V92.8M602.4 85.8H616.4" stroke="#B4B4AE" stroke-width="0.8"/>
<rect x="609.4" y="85.8" width="7.2" height="7.2" fill="#FBFBFA" stroke="#4A74C4" stroke-width="1.1"/>
</g>
<path d="M624.2 84h5l-2.5 3z" fill="#000"/>
<g>
<defs><linearGradient id="bgc" x1="0" y1="0" x2="1" y2="1"><stop offset="0" stop-color="#1E4A9C"/><stop offset="1" stop-color="#5A8CD8"/></linearGradient></defs>
<rect x="636.4" y="77.2" width="15.2" height="12.4" rx="1" fill="url(#bgc)" stroke="#1E3E84" stroke-width="0.8"/>
<path d="M638.6 80h8M638.6 82.2h6M638.6 84.4h8M638.6 86.6h5" stroke="#E8F0FC" stroke-width="1"/>
<rect x="635.2" y="90.4" width="17.2" height="3.6" rx="0.8" fill="#FFFFFF" stroke="#2A2A2A" stroke-width="0.9"/>
</g>
<path d="M659.2 83.6h5l-2.5 3z" fill="#000"/>
<g>
<circle cx="673.2" cy="84.6" r="2.9" fill="#4CC028" stroke="#2E8E14" stroke-width="0.5"/>
<circle cx="673.2" cy="80" r="3.1" fill="#E42830" stroke="#A8101A" stroke-width="0.5"/>
<circle cx="677" cy="82" r="2.6" fill="#3E70C8" stroke="#2A4E98" stroke-width="0.5"/>
<path d="M677.6 84.4Q680 82 683.6 82.8Q686.4 83.8 686.4 86.4V89.6H684V87Q683.6 85.2 681.6 85.6V89.6H679V86Q678.6 85 677.6 84.4Z" fill="#4878CC" stroke="#2A4E98" stroke-width="0.6"/>
<rect x="669.8" y="90.4" width="17.6" height="3.6" rx="0.8" fill="#FFFFFF" stroke="#2A2A2A" stroke-width="0.9"/>
</g>
<path d="M693.8 83.6h5l-2.5 3z" fill="#000"/>
<path d="M704 79V93" stroke="#D3CEBA" stroke-width="1.2"/>
<rect x="708.4" y="72" width="26.600000000000023" height="27.599999999999994" rx="2.5" fill="#FCFCFD" stroke="#9AB6E2" stroke-width="1"/>
<g>
<defs><linearGradient id="gr" x1="0" y1="0" x2="1" y2="1"><stop offset="0" stop-color="#C8C8C2"/><stop offset="0.6" stop-color="#ECECE8"/><stop offset="1" stop-color="#F8F8F6"/></linearGradient></defs>
<rect x="713.4" y="77.2" width="16.4" height="16.2" rx="0.8" fill="url(#gr)" stroke="#8E8E88" stroke-width="1"/>
<path d="M718.4 77.4V90M723 77.4V86M727 77.4V82M713.6 80.8H729.6M713.6 84.2H726M713.6 87.4H722M713.6 90.4H718" stroke="#8E8E88" stroke-width="0.8" opacity="0.8"/>
</g>
<defs><linearGradient id="ovf2" x1="0" y1="0" x2="0" y2="1"><stop offset="0" stop-color="#E2DFD0"/><stop offset="1" stop-color="#B4B1A0"/></linearGradient></defs>
<rect x="740.2" y="71.4" width="6.6" height="28" fill="url(#ovf2)"/>
<path d="M741.6 92.6h4.2l-2.1 2.4z" fill="#000"/>
</svg>
<div id="fbar"></div>
<svg id="fbi" style="left:0;top:102px" width="800" height="33" viewBox="0 102 800 33">
<rect x="5.1" y="110.9" width="93.80000000000001" height="15.199999999999989" fill="#FFFFFF" stroke="#9CB4DC" stroke-width="1"/>
<rect x="86" y="112.2" width="11.4" height="12.4" rx="1.2" fill="#C2D3F8"/>
<path d="M88.6 116.8l3.1 3l3.1 -3" fill="none" stroke="#3E5C9E" stroke-width="1.8"/>
<text x="7.4" y="122.4" font-family="Liberation Sans,sans-serif" font-size="9" fill="#111" textLength="8.8" lengthAdjust="spacingAndGlyphs">B3</text>
<text x="109.8" y="122" font-family="Liberation Serif,serif" font-size="13.5" fill="#111" textLength="5.4" lengthAdjust="spacingAndGlyphs" font-weight="bold" font-style="italic">f</text>
<text x="115.2" y="122" font-family="Liberation Serif,serif" font-size="8" fill="#222" textLength="10.2" lengthAdjust="spacingAndGlyphs" font-style="italic">(x)</text>
<text x="136.5" y="125.2" font-family="Liberation Serif,serif" font-size="18" fill="#0A0A0A" textLength="13.8" lengthAdjust="spacingAndGlyphs" font-weight="bold">Σ</text>
<rect x="162.6" y="114.8" width="12.6" height="2" fill="#0A0A0A"/><rect x="162.6" y="119.2" width="12.6" height="2" fill="#0A0A0A"/>
<rect x="188.6" y="110.6" width="612" height="15.6" fill="#FFFFFF"/>
<path d="M188.9 126.2V110.9H800" fill="none" stroke="#7C7A6A" stroke-width="1"/>
<path d="M189 126.5H800" fill="none" stroke="#F8F7F0" stroke-width="1"/>
<text x="191.6" y="122.2" font-family="Liberation Sans,sans-serif" font-size="9" fill="#111" textLength="4.6" lengthAdjust="spacingAndGlyphs">9</text>
</svg>
<div id="grid">
<div class="hl" style="top:36px"></div>
<div class="hl" style="top:60px"></div>
<div class="hl" style="top:84px"></div>
<div class="hl" style="top:108px"></div>
<div class="hl" style="top:132px"></div>
<div class="hl" style="top:156px"></div>
<div class="hl" style="top:180px"></div>
<div class="hl" style="top:204px"></div>
<div class="hl" style="top:228px"></div>
<div class="hl" style="top:252px"></div>
<div class="hl" style="top:276px"></div>
<div class="hl" style="top:300px"></div>
<div class="hl" style="top:324px"></div>
<div class="hl" style="top:348px"></div>
<div class="hl" style="top:372px"></div>
<div class="hl" style="top:396px"></div>
<div class="hl" style="top:420px"></div>
<div class="vl" style="left:501px"></div>
<div class="vl" style="left:611px"></div>
<div class="vl" style="left:720px"></div>
<div class="ch" style="left:0;width:27px;border-right-color:#8C8A78"></div>
<div class="ch" style="left:27px;width:475px">A</div>
<div class="ch" id="chB" style="left:502px;width:110px">B</div>
<div class="ch" style="left:612px;width:109px">C</div>
<div class="ch" style="left:721px;width:108px">D</div>
<div class="rh" style="top:13px">1</div>
<div class="c a bl" style="top:13px;letter-spacing:0.111px">Uzasilania</div>
<div class="c r" style="top:13px;left:502px;width:107px">34</div>
<div class="rh" style="top:37px">2</div>
<div class="c a bl" style="top:37px;letter-spacing:0.04px">Spadek napięcia na diodzie</div>
<div class="c r" style="top:37px;left:502px;width:107px">3</div>
<div class="rh" id="rh3" style="top:61px">3</div>
<div class="c a bl" style="top:61px;letter-spacing:-0.1px">Liczba diod</div>
<div class="c r" style="top:61px;left:502px;width:107px">9</div>
<div class="rh" style="top:85px">4</div>
<div class="c a " style="top:85px;letter-spacing:-0.305px">Sumaryczny spadek napięcia na diodach</div>
<div class="c r" style="top:85px;left:502px;width:107px">27</div>
<div class="rh" style="top:109px">5</div>
<div class="c a " style="top:109px;letter-spacing:-0.346px">D -Współczyynik wypełnienia</div>
<div class="c r" style="top:109px;left:502px;width:107px">0,79</div>
<div class="rh" style="top:133px">6</div>
<div class="c a rd" style="top:133px;letter-spacing:0.027px">Uwaga wyliczenia prawdziwe dla D > 0,5</div>
<div class="rh" style="top:157px">7</div>
<div class="c a bl" style="top:157px;letter-spacing:-0.357px">Prąd diody [mA]</div>
<div class="c r" style="top:157px;left:502px;width:107px">350</div>
<div class="rh" style="top:181px">8</div>
<div class="c a " style="top:181px;letter-spacing:-0.313px">Wymagany rezystor</div>
<div class="c r" style="top:181px;left:502px;width:107px">0,29</div>
<div class="rh" style="top:205px">9</div>
<div class="c a bl" style="top:205px;letter-spacing:0.023px">Wpisz najbliższą wartość rezystora z szeregu</div>
<div class="c r" style="top:205px;left:502px;width:107px">0,3</div>
<div class="rh" style="top:229px">10</div>
<div class="c a " style="top:229px;letter-spacing:-0.429px">Nowy prąd diody</div>
<div class="c r" style="top:229px;left:502px;width:107px">0,333</div>
<div class="rh" style="top:253px">11</div>
<div class="rh" style="top:277px">12</div>
<div class="c a " style="top:277px;letter-spacing:-0.278px">Częstotliwość pracy</div>
<div class="c r" style="top:277px;left:502px;width:107px">588235,29</div>
<div class="c r" style="top:277px;left:612px;width:107px">588,24</div>
<div class="c" style="top:277px;left:722px">kHz</div>
<div class="rh" style="top:301px">13</div>
<div class="c a " style="top:301px;letter-spacing:-0.231px">Wartość dławika większa niż</div>
<div class="c r" style="top:301px;left:502px;width:107px">0,000091</div>
<div class="c r" style="top:301px;left:612px;width:107px">91,13</div>
<div class="c" style="top:301px;left:722px">uH</div>
<div class="rh" style="top:325px">14</div>
<div class="c a bl" style="top:325px;letter-spacing:0.083px">Nowa wartość dławika w uH</div>
<div class="c r" style="top:325px;left:502px;width:107px">220,000000</div>
<div class="c r" style="top:325px;left:612px;width:107px">0,000220</div>
<div class="c" style="top:325px;left:722px">H</div>
<div class="rh" style="top:349px">15</div>
<div class="c a " style="top:349px;letter-spacing:-0.305px">Nowa częstotliwość w kHz</div>
<div class="c r" style="top:349px;left:502px;width:107px">243,650</div>
<div class="rh" style="top:373px">16</div>
<div class="rh" style="top:397px">17</div>
<div class="rh" style="top:421px">18</div>
<div id="sel" style="left:501px;top:59px;width:112px;height:26px;border:2px solid #000"></div>
<div id="selh" style="left:610px;top:83px;width:4px;height:4px;background:#000"></div>
<div id="edge"></div>
</div>
</div>
</body>
</html>
